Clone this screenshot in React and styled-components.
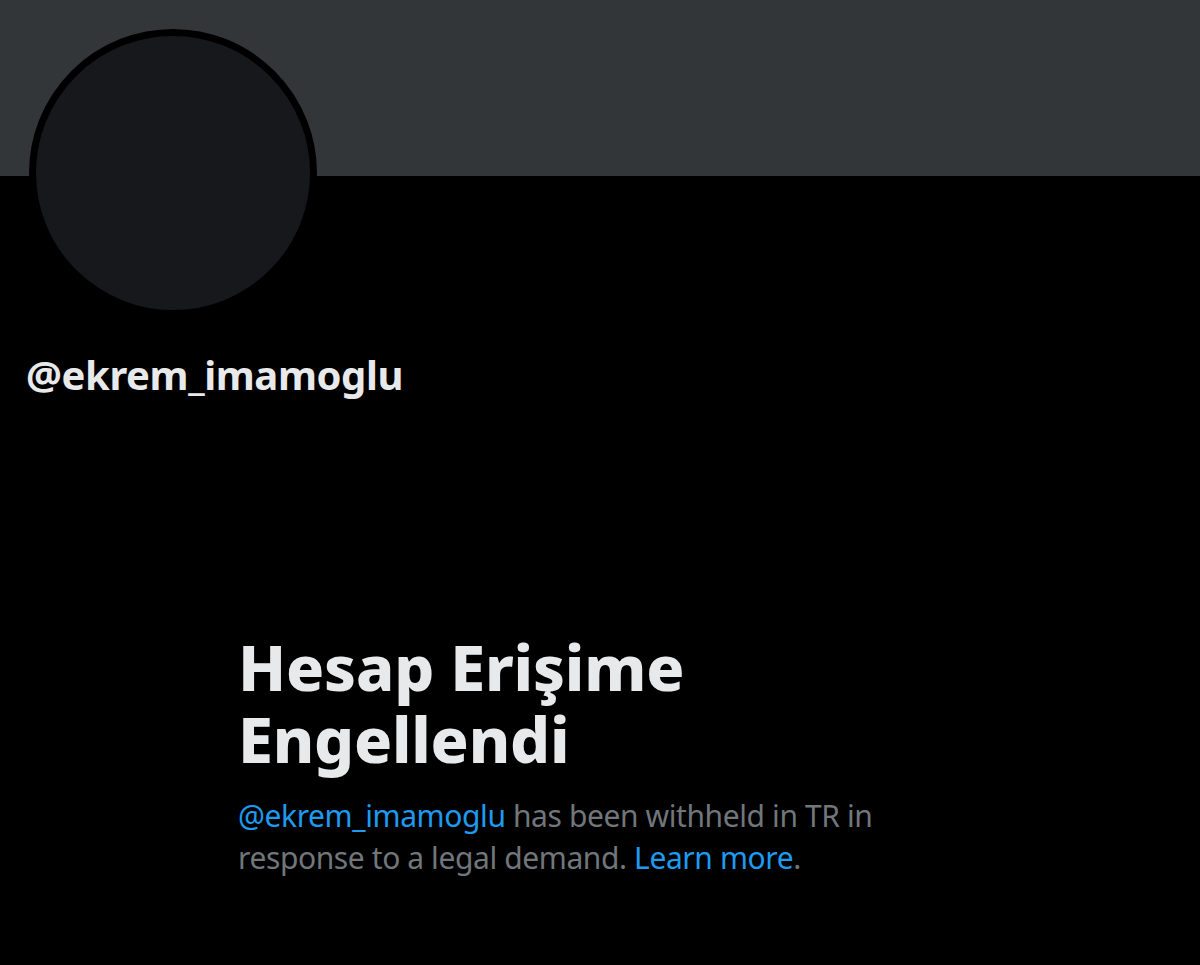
import React from "react";
import styled, { createGlobalStyle } from "styled-components";

const GlobalStyle = createGlobalStyle`
  html, body {
    margin: 0;
    padding: 0;
    background: #000000;
  }
  body {
    font-family: "Noto Sans", "Open Sans", sans-serif;
  }
`;

const Page = styled.div`
  width: 1200px;
  height: 965px;
  background: #000000;
  overflow: hidden;
  display: flex;
  flex-direction: column;
`;

const Banner = styled.div`
  height: 176px;
  background: #333639;
  flex-shrink: 0;
`;

const ProfileHeader = styled.div`
  padding: 0 0 0 29px;
  display: flex;
  flex-direction: column;
  align-items: flex-start;
`;

const Avatar = styled.div`
  width: 288px;
  height: 288px;
  box-sizing: border-box;
  border-radius: 50%;
  border: 7px solid #000000;
  background: #16181c;
  margin-top: -147px;
`;

const Handle = styled.div`
  margin-top: 34px;
  margin-left: -3px;
  color: #e7e9ea;
  font-size: 40px;
  font-weight: 700;
  line-height: 48px;
  letter-spacing: -0.4px;
`;

const EmptyState = styled.div`
  margin-top: 232px;
  padding-left: 238px;
  width: 660px;
`;

const Title = styled.h1`
  margin: 0;
  color: #e7e9ea;
  font-size: 63px;
  font-weight: 800;
  line-height: 72px;
  letter-spacing: -0.2px;
`;

const Message = styled.p`
  margin: 20px 0 0;
  color: #71767b;
  font-size: 30px;
  line-height: 42px;
  letter-spacing: -0.4px;
`;

const Link = styled.a`
  color: #1d9bf0;
  text-decoration: none;
`;

export default function App() {
  return (
    <>
      <GlobalStyle />
      <Page>
        <Banner />
        <ProfileHeader>
          <Avatar />
          <Handle>@ekrem_imamoglu</Handle>
        </ProfileHeader>
        <EmptyState>
          <Title>
            Hesap Erişime
            <br />
            Engellendi
          </Title>
          <Message>
            <Link>@ekrem_imamoglu</Link> has been withheld in TR in
            <br />
            response to a legal demand. <Link>Learn more</Link>.
          </Message>
        </EmptyState>
      </Page>
    </>
  );
}
